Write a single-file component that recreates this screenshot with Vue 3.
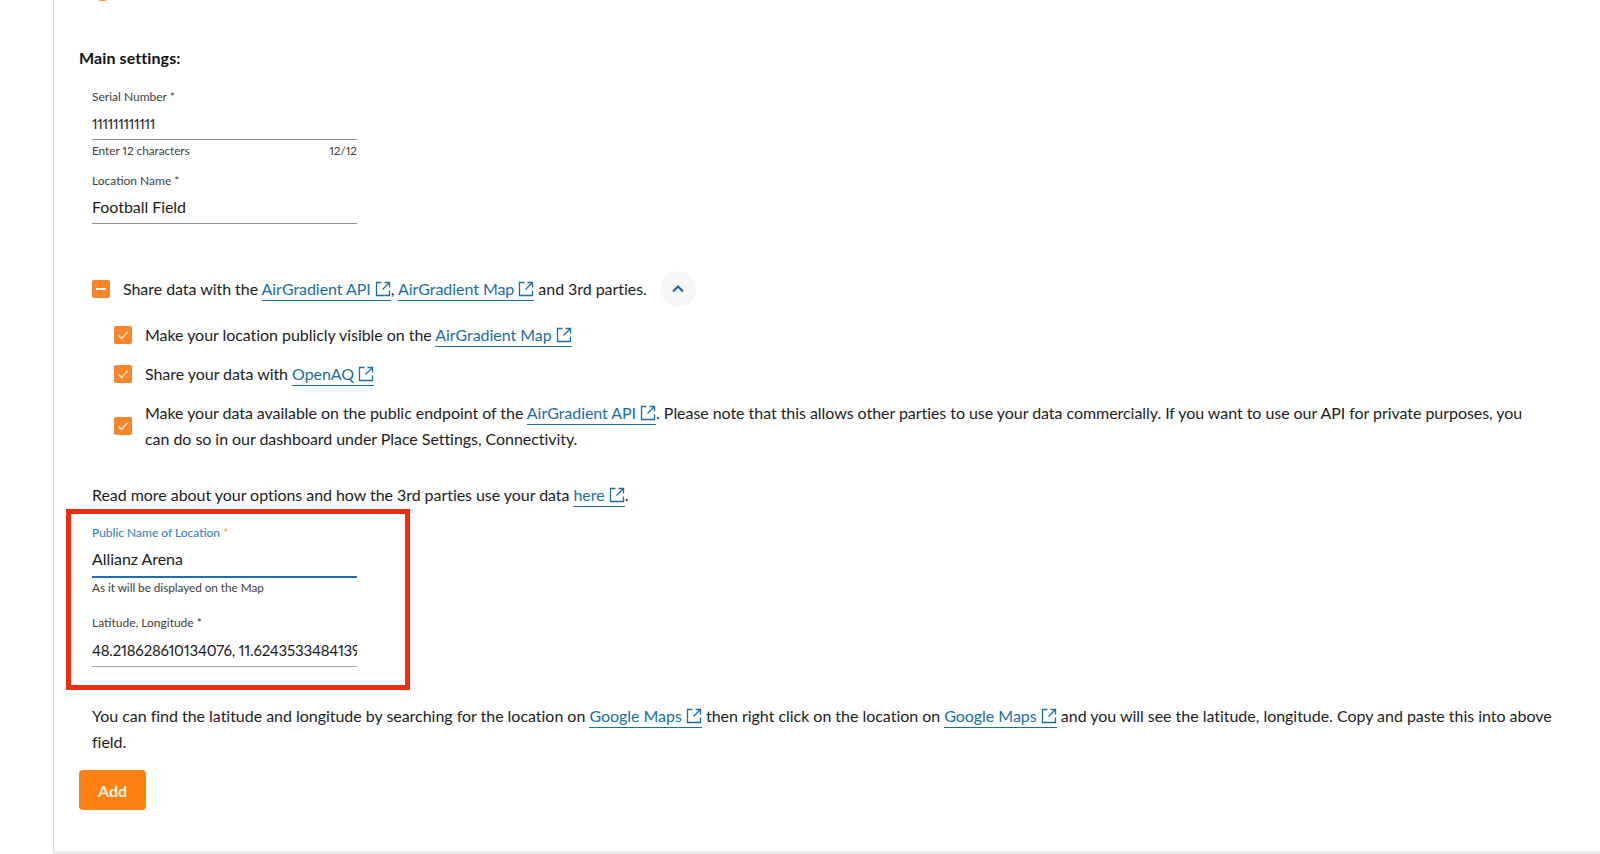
<script setup>
const ext = 'M6.5 1.5H1.5v13h13V9.5M9.5 1.5h5v5M14.5 1.5L7.5 8.5'
</script>

<template>
  <div class="page">
    <main class="content">
      <span class="top-dot"></span>
      <h2 class="title">Main settings:</h2>

      <div class="field serial">
        <label class="label">Serial Number *</label>
        <div class="value small-val">111111111111</div>
        <div class="help"><span>Enter 12 characters</span><span>12/12</span></div>
      </div>
      <div class="field location">
        <label class="label">Location Name *</label>
        <div class="value">Football Field</div>
      </div>

      <div class="row share">
        <span class="box"><span class="dash"></span></span>
        <span>Share data with the <a class="link">AirGradient API <svg class="ext" viewBox="0 0 16 16"><path :d="ext" /></svg></a>, <a class="link">AirGradient Map <svg class="ext" viewBox="0 0 16 16"><path :d="ext" /></svg></a> and 3rd parties.</span>
        <span class="chev"><svg viewBox="0 0 16 16" width="16" height="16"><path d="M3 10.5L8 5.5l5 5" /></svg></span>
      </div>

      <div class="subs">
        <div class="row sub">
          <span class="box"><svg viewBox="0 0 18 18"><path d="M4 9.5l3.5 3.5L14 5.5" /></svg></span>
          <span>Make your location publicly visible on the <a class="link">AirGradient Map <svg class="ext" viewBox="0 0 16 16"><path :d="ext" /></svg></a></span>
        </div>
        <div class="row sub">
          <span class="box"><svg viewBox="0 0 18 18"><path d="M4 9.5l3.5 3.5L14 5.5" /></svg></span>
          <span>Share your data with <a class="link">OpenAQ <svg class="ext" viewBox="0 0 16 16"><path :d="ext" /></svg></a></span>
        </div>
        <div class="row sub">
          <span class="box"><svg viewBox="0 0 18 18"><path d="M4 9.5l3.5 3.5L14 5.5" /></svg></span>
          <span>Make your data available on the public endpoint of the <a class="link">AirGradient API <svg class="ext" viewBox="0 0 16 16"><path :d="ext" /></svg></a>. Please note that this allows other parties to use your data commercially. If you want to use our API for private purposes, you can do so in our dashboard under Place Settings, Connectivity.</span>
        </div>
      </div>

      <p class="para read">Read more about your options and how the 3rd parties use your data <a class="link">here <svg class="ext" viewBox="0 0 16 16"><path :d="ext" /></svg></a>.</p>

      <div class="highlight">
        <div class="field public">
          <label class="label blue">Public Name of Location <i>*</i></label>
          <div class="value focus">Allianz Arena</div>
          <div class="help"><span>As it will be displayed on the Map</span></div>
        </div>
        <div class="field latlng">
          <label class="label">Latitude, Longitude *</label>
          <div class="value coords">48.218628610134076, 11.6243533484139</div>
        </div>
      </div>

      <p class="para find">You can find the latitude and longitude by searching for the location on <a class="link">Google Maps <svg class="ext" viewBox="0 0 16 16"><path :d="ext" /></svg></a> then right click on the location on <a class="link">Google Maps <svg class="ext" viewBox="0 0 16 16"><path :d="ext" /></svg></a> and you will see the latitude, longitude. Copy and paste this into above field.</p>

      <button class="add">Add</button>
    </main>
  </div>
</template>

<style>
html, body { margin: 0; background: #fff; }
</style>

<style scoped>
.page {
  height: 854px;
  box-sizing: border-box;
  overflow: hidden;
  padding-left: 53px;
  font-family: Lato, "Noto Sans", sans-serif;
  font-size: 16px;
  letter-spacing: -0.05px;
  font-variant-numeric: proportional-nums;
  color: #1c1c1c;
}
.content {
  position: relative;
  height: 854px;
  box-sizing: border-box;
  border-left: 1px solid #dedede;
  border-bottom: 3px solid #ececec;
  padding: 48px 40px 0 25px;
}
.top-dot {
  position: absolute;
  left: 41px;
  top: -8px;
  width: 15px;
  height: 9px;
  border-radius: 50%;
  background: #f5862a;
}
.title {
  margin: 0;
  font-size: 16px;
  letter-spacing: 0.1px;
  line-height: 20px;
  font-weight: 700;
  color: #111;
}
.field { width: 265px; margin-left: 13px; }
.serial { margin-top: 21px; }
.location { margin-top: 14px; }
.label {
  display: block;
  font-size: 12px;
  line-height: 16px;
  letter-spacing: 0;
  color: #3d3d3d;
}
.blue { color: #2f7db5; }
.blue i { font-style: normal; color: #f0a050; }
.value {
  height: 30px;
  line-height: 30px;
  margin-top: 4px;
  font-size: 16px;
  color: #1c1c1c;
  white-space: nowrap;
  overflow: hidden;
  border-bottom: 1px solid #8f8f8f;
}
.small-val { font-size: 14px; letter-spacing: -0.3px; }
.location .value { margin-top: 3px; height: 31px; }
.focus { border-bottom: 2px solid #1c6fb5; height: 32px; margin-top: 3px; }
.coords { border-bottom-color: #a8a8a8; height: 31px; font-size: 15px; letter-spacing: -0.2px; }
.help {
  display: flex;
  justify-content: space-between;
  font-size: 11.8px;
  line-height: 16px;
  margin-top: 3px;
  color: #3d3d3d;
}
.public .help { margin-top: 2px; }
.row { display: flex; align-items: center; line-height: 25.6px; }
.box {
  flex: none;
  width: 18px;
  height: 18px;
  border-radius: 2px;
  background: #f9862a;
  display: flex;
  align-items: center;
  justify-content: center;
}
.box svg { width: 16px; height: 16px; fill: none; stroke: #ffe9d2; stroke-width: 1.6; }
.dash { width: 10px; height: 2.5px; background: #fff; }
.share { margin: 46px 0 0 13px; gap: 13px; height: 38px; }
.chev {
  width: 36px;
  height: 36px;
  border-radius: 50%;
  background: #f6f7f7;
  display: flex;
  align-items: center;
  justify-content: center;
}
.chev svg { fill: none; stroke: #155e8e; stroke-width: 2; }
.subs { margin: 14px 0 0 35px; padding-right: 25px; display: flex; flex-direction: column; gap: 13.5px; }
.sub { gap: 13px; }
.link {
  color: #1a6ea3;
  border-bottom: 1px solid #1a6ea3;
  padding-bottom: 2px;
}
.ext {
  width: 16px;
  height: 16px;
  vertical-align: -2px;
  fill: none;
  stroke: #1a6ea3;
  stroke-width: 1.3;
}
.para { margin: 0; line-height: 25.6px; }
.read { margin: 31px 0 0 13px; }
.highlight {
  margin: 1px 0 0 -13px;
  width: 344px;
  height: 181px;
  box-sizing: border-box;
  border: 5px solid #f02c12;
  padding-top: 11px;
}
.highlight .field { margin-left: 21px; }
.latlng { margin-top: 19px; }
.find { margin: 13px 0 0 13px; letter-spacing: -0.03px; }
.add {
  display: block;
  margin-top: 16px;
  width: 67px;
  height: 40px;
  border: 0;
  border-radius: 4px;
  background: #fb8113;
  color: #fff3e0;
  font: 700 16px Lato, "Noto Sans", sans-serif;
}
</style>
